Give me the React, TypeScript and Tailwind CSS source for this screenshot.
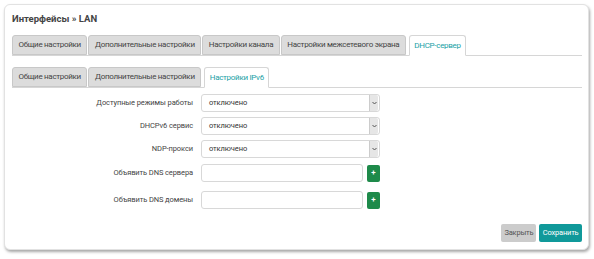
import React from "react";

const font = { fontFamily: "Roboto, 'Liberation Sans', sans-serif" };

function Tab({ label, active }: { label: string; active?: boolean }) {
  return active ? (
    <div className="h-[21px] px-[4.5px] flex items-center border border-[#d6d6d6] border-b-white bg-white rounded-t-[3px] text-[#1a9fa6] text-[8px] tracking-[-0.3px] -mb-px relative z-10">
      {label}
    </div>
  ) : (
    <div className="h-[20px] px-[5.5px] flex items-center border border-[#c8c8c8] bg-[#dcdcdc] rounded-t-[3px] text-[#444] text-[8px] tracking-[-0.3px]">
      {label}
    </div>
  );
}

function SelectBox() {
  return (
    <div className="w-[179px] h-[18px] border border-[#d8d8d8] rounded-[3px] flex items-center bg-white">
      <span className="flex-1 pl-[7px] text-[7.5px] tracking-[-0.1px] text-[#333]">отключено</span>
      <div className="w-[9px] h-[16px] mr-[1px] bg-[#e6e6e6] border-l border-[#ccc] rounded-r-[2px] flex items-center justify-center">
        <svg width="5" height="4" viewBox="0 0 5 4"><path d="M0.5 1 L2.5 3 L4.5 1" stroke="#555" strokeWidth="1" fill="none" /></svg>
      </div>
    </div>
  );
}

function InputPlus() {
  return (
    <div className="flex items-center gap-[4px]">
      <div className="w-[162px] h-[18px] border border-[#d8d8d8] rounded-[3px] bg-white" />
      <div className="w-[13px] h-[17px] bg-[#1e8a4a] rounded-[2px] flex items-center justify-center text-white text-[8px] font-bold leading-none">+</div>
    </div>
  );
}

function Row({ label, children, mt }: { label: string; children: React.ReactNode; mt: string }) {
  return (
    <div className={`flex items-center ${mt}`}>
      <div className="w-[181px] text-right text-[7.5px] tracking-[-0.1px] text-[#444]">{label}</div>
      <div className="ml-[8px]">{children}</div>
    </div>
  );
}

export default function App() {
  return (
    <div className="w-[594px] h-[259px] bg-white pt-[4px] pl-[4px]" style={font}>
      <div className="w-[585px] h-[246px] bg-white rounded-[6px] border border-[#e2e2e2] shadow-[1px_2px_3px_rgba(0,0,0,0.35)] pl-[7px] pr-[6px] pt-[7px] flex flex-col">
        <div className="text-[9.5px] font-bold text-[#444] leading-[14px]">Интерфейсы » LAN</div>
        <div className="mt-[9px] flex items-end gap-[1px] border-b border-[#d6d6d6] h-[21px]">
          <Tab label="Общие настройки" />
          <Tab label="Дополнительные настройки" />
          <Tab label="Настройки канала" />
          <Tab label="Настройки межсетевого экрана" />
          <div className="w-[1px]" />
          <Tab label="DHCP-сервер" active />
        </div>
        <div className="mt-[11px] flex items-end gap-[1px] border-b border-[#d6d6d6] h-[21px]">
          <Tab label="Общие настройки" />
          <Tab label="Дополнительные настройки" />
          <div className="w-[1px]" />
          <Tab label="Настройки IPv6" active />
        </div>
        <Row label="Доступные режимы работы" mt="mt-[6px]"><SelectBox /></Row>
        <Row label="DHCPv6 сервис" mt="mt-[5px]"><SelectBox /></Row>
        <Row label="NDP-прокси" mt="mt-[5px]"><SelectBox /></Row>
        <Row label="Объявить DNS сервера" mt="mt-[6px]"><InputPlus /></Row>
        <Row label="Объявить DNS домены" mt="mt-[9px]"><InputPlus /></Row>
        <div className="flex justify-end gap-[3px] mt-[15px]">
          <div className="h-[18px] px-[3px] bg-[#cccccc] rounded-[2px] flex items-center text-[7.5px] tracking-[-0.2px] text-[#555]">Закрыть</div>
          <div className="h-[18px] px-[3.5px] bg-[#10999a] rounded-[2px] flex items-center text-[7.5px] tracking-[-0.2px] text-white">Сохранить</div>
        </div>
      </div>
    </div>
  );
}
